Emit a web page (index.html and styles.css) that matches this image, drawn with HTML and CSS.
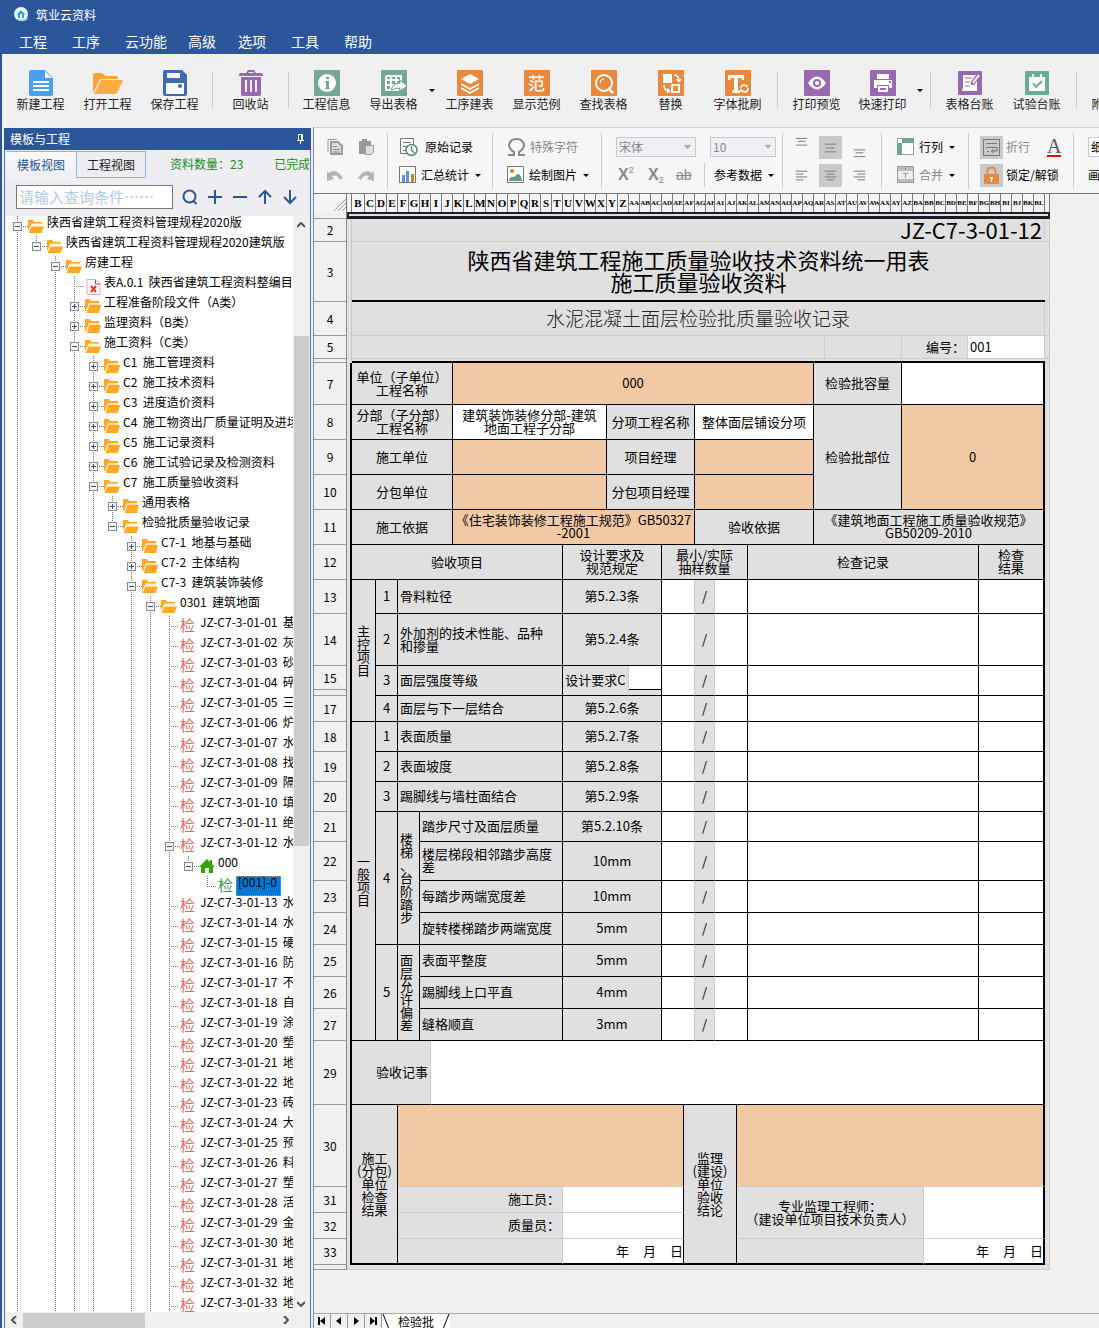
FILE: index.html
```html
<!DOCTYPE html>
<html lang="zh-CN">
<head>
<meta charset="utf-8">
<title>筑业云资料</title>
<link rel="stylesheet" href="styles.css">
</head>
<body>
<svg class="defs" aria-hidden="true">
  <symbol id="fo" viewBox="0 0 16 14"><path fill="#ffa726" d="M0 1h5l1 2h8v3H3L0 12z"/><path fill="#fff" d="M3 6h11V4.500H3.500z" opacity=".8"/><path fill="#ffa726" d="M3.500 7.500H16L13.500 14H.5z"/></symbol>
  <symbol id="fc" viewBox="0 0 16 14"><path fill="#ffa726" d="M0 0h5l1 2h8v2H4L1 12H0z"/><path fill="#ffe0b0" d="M4 4h10v2H4L2 11z"/><path fill="#ffa726" d="M4.500 6H16l-2 8H1.500z"/></symbol>
</svg>

<header class="top">
  <div class="title">
    <svg width="16" height="16" viewBox="0 0 16 16"><circle cx="7" cy="7" r="7" fill="#e8f6fd"/><path d="M2.500 7.500L7 3l4.500 4.500h-1.500V11H4V7.500z" fill="#35a8e0"/><path d="M6 7h2v4H6z" fill="#fff"/><path d="M3 12q6 2 12-1-3 4-9 3z" fill="#8fc9ee"/></svg>
    <span>筑业云资料</span>
  </div>
  <nav class="menu">
    <button>工程</button><button>工序</button><button>云功能</button><button>高级</button><button>选项</button><button>工具</button><button>帮助</button>
  </nav>
</header>

<div class="window">
  <div class="ribbon">
    <button class="big"><svg viewBox="0 0 26 26"><path fill="#4a9ff0" d="M3 0h14l8 8v16q0 2-2 2H3q-2 0-2-2V2q0-2 2-2z"/><path fill="#fff" d="M17 1v6q0 1 1 1h6zM5 11h16v2H5zM5 15h16v2H5zM5 19h16v2H5z"/></svg>新建工程</button>
    <button class="big"><svg viewBox="0 0 32 26"><path fill="#ffa238" d="M1 23V5q0-2 2-2h7l4 3h10q2 0 2 2v1H8z"/><path fill="#ffab45" d="M9 10h22l-6 13q-1 1-2 1H2z"/></svg>打开工程</button>
    <button class="big"><svg viewBox="0 0 26 26"><path fill="#3f6cb0" d="M3 0h17l5 5v19q0 2-2 2H3q-2 0-2-2V2q0-2 2-2z"/><path fill="#f5f7fa" d="M5 3h13v5H5zM4 13h18v11H4z"/><circle cx="18" cy="16" r="2" fill="#3f6cb0"/></svg>保存工程</button>
    <i class="sep"></i>
    <button class="big"><svg viewBox="0 0 26 26"><path fill="#9a68b2" fill-rule="evenodd" d="M8 3l2-3h6l2 3h6q1 0 1 3H1q0-3 1-3zm2 0h6l-1-1h-4zM3 7h20v17q0 2-2 2H5q-2 0-2-2zm4 3v12h2V10zm5 0v12h2V10zm5 0v12h2V10z"/></svg>回收站</button>
    <i class="sep"></i>
    <button class="big"><svg viewBox="0 0 26 26"><rect width="26" height="26" rx="1" fill="#74a895"/><circle cx="13" cy="13" r="9" fill="#fff"/><path fill="#74a895" d="M12 7h3v2h-3zM11 11h4v7h1v1h-5v-1h1v-6h-1z"/></svg>工程信息</button>
    <button class="big"><svg viewBox="0 0 26 26"><rect width="26" height="26" rx="1" fill="#74a895"/><path fill="none" stroke="#fff" stroke-width="2" d="M5 6h15v5M5 6v14h13M5 10h13M5 15h8M10 6v14M15 6v7"/><path fill="#fff" stroke="#74a895" d="M10 20q2-7 9-7v-3l7 6-7 5v-3q-5 0-9 2z"/></svg>导出表格</button>
    <button class="drop" aria-label="更多导出"></button>
    <button class="big"><svg viewBox="0 0 26 26"><rect width="26" height="26" rx="1" fill="#e8893d"/><path fill="#fff" d="M13 4l9 5-9 5-9-5zM4 13l9 5 9-5v2l-9 5-9-5zM4 17l9 5 9-5v2l-9 5-9-5z"/></svg>工序建表</button>
    <button class="big"><b class="glyph">范</b>显示范例</button>
    <button class="big"><svg viewBox="0 0 26 26"><rect width="26" height="26" rx="1" fill="#e8893d"/><circle cx="13" cy="13" r="8" fill="none" stroke="#fff" stroke-width="2"/><path stroke="#fff" stroke-width="2.500" d="M17 18l5 5"/><path fill="none" stroke="#fff" d="M9 13q0-4 4-4"/></svg>查找表格</button>
    <button class="big"><svg viewBox="0 0 26 26"><rect width="26" height="26" rx="1" fill="#e8893d"/><path fill="#fff" d="M5 4h9v9H5z"/><path fill="none" stroke="#fff" stroke-width="2" d="M14 15h7v7h-7z"/><path fill="none" stroke="#fff" stroke-width="1.500" d="M16 5q5 0 5 6M18.500 9l2.500 2.500L23 9M6 15q0 6 5 6M9 18.500l2.500 2.500L9 23"/></svg>替换</button>
    <button class="big"><svg viewBox="0 0 26 26"><rect width="26" height="26" rx="1" fill="#e8893d"/><path fill="#fff" d="M3 5h16v5h-2l-1-2h-3v12l2 1v2H7v-2l2-1V8H6l-1 2H3z"/><path fill="none" stroke="#fff" stroke-width="1.500" d="M16 18q0-3 3-3 2 0 3 2v-2M23 18q0 4-3 4-2 0-4-2v2"/></svg>字体批刷</button>
    <i class="sep wide"></i>
    <button class="big"><svg viewBox="0 0 26 26"><rect width="26" height="26" rx="1" fill="#9a68b2"/><path fill="#fff" d="M4 13q9-13 18 0-9 13-18 0z"/><circle cx="13" cy="13" r="4" fill="#9a68b2"/><circle cx="13" cy="13" r="2" fill="#fff"/></svg>打印预览</button>
    <button class="big near"><svg viewBox="0 0 26 26"><rect width="26" height="26" rx="1" fill="#9a68b2"/><path fill="#fff" d="M7 4h12v5H7zM4 10h18v8h-3v-3H7v3H4zM8 16h10v6H8z"/><path fill="#9a68b2" d="M10 18h6v2h-6zM19 11h2v2h-2z"/></svg>快速打印</button>
    <button class="drop" aria-label="更多打印"></button>
    <i class="sep wide"></i>
    <button class="big"><svg viewBox="0 0 26 26"><rect x="1" y="1" width="24" height="24" rx="1" fill="#9a68b2"/><path fill="#fff" d="M6 5h13l-5 7v3h3l3-4v10H5q0-2 1-3z"/><path fill="none" stroke="#9a68b2" d="M8 8h7M8 12h5M8 16h5"/><path stroke="#fff" stroke-width="2" d="M16 13l6-8"/></svg>表格台账</button>
    <button class="big"><svg viewBox="0 0 26 26"><rect x="1" y="1" width="24" height="24" rx="1" fill="#68ae98"/><path fill="#fff" d="M5 7h3V4h2v3h6V4h2v3h3v14H5z"/><path fill="none" stroke="#68ae98" stroke-width="2" d="M9 13l3 4 6-6"/></svg>试验台账</button>
    <i class="sep wide"></i>
    <button class="big"><svg viewBox="0 0 26 26"></svg>附件管理</button>
  </div>

  <div class="work">
    <aside class="panel">
      <h2>模板与工程<svg width="9" height="10" viewBox="0 0 9 10"><path fill="none" stroke="#fff" d="M2.500 6V.5h4V6M5.500 1v5M1 6.500h7M4.500 7v3"/></svg></h2>
      <div class="inner">
        <div class="tabs">
          <button class="on">模板视图</button><button>工程视图</button>
          <span class="count">资料数量：23</span><span>已完成：1</span>
        </div>
        <div class="search">
          <input type="text" aria-label="查询条件" placeholder="请输入查询条件……">
          <button aria-label="查询"><svg viewBox="0 0 16 16"><circle cx="7.500" cy="7.500" r="6"/><path d="M11.500 12l3 3"/></svg></button>
          <button aria-label="展开"><svg viewBox="0 0 16 16"><path d="M8 1v14M1 8h14"/></svg></button>
          <button aria-label="折叠"><svg viewBox="0 0 16 16"><path d="M1 8h14"/></svg></button>
          <button aria-label="上一个"><svg viewBox="0 0 16 16"><path d="M8 2v13M2 8l6-6 6 6"/></svg></button>
          <button aria-label="下一个"><svg viewBox="0 0 16 16"><path d="M8 1v13M2 8l6 6 6-6"/></svg></button>
        </div>
        <div class="treebox">
          <ul class="tree">
            <li><div class="row"><button aria-label="折叠"></button><svg><use href="#fo"/></svg><span>陕西省建筑工程资料管理规程2020版</span></div>
            <ul><li class="last"><div class="row"><button aria-label="折叠"></button><svg><use href="#fo"/></svg><span>陕西省建筑工程资料管理规程2020建筑版</span></div>
            <ul><li><div class="row"><button aria-label="折叠"></button><svg><use href="#fo"/></svg><span>房建工程</span></div>
            <ul>
              <li><div class="row leaf"><svg viewBox="0 0 16 16"><path fill="#fff" stroke="#f3a5a5" d="M2 .5h9l4 4v11H2z"/><path fill="none" stroke="#e33" stroke-width="2" d="M6 7l5 6M11 7l-5 6"/><path fill="none" stroke="#e33" d="M10.500 1v4H15"/></svg><span>表A.0.1  陕西省建筑工程资料整编目录</span></div></li>
              <li><div class="row"><button class="plus" aria-label="展开"></button><svg><use href="#fc"/></svg><span>工程准备阶段文件（A类）</span></div></li>
              <li><div class="row"><button class="plus" aria-label="展开"></button><svg><use href="#fc"/></svg><span>监理资料（B类）</span></div></li>
              <li><div class="row"><button aria-label="折叠"></button><svg><use href="#fo"/></svg><span>施工资料（C类）</span></div>
              <ul>
                <li><div class="row"><button class="plus" aria-label="展开"></button><svg><use href="#fc"/></svg><span>C1  施工管理资料</span></div></li>
                <li><div class="row"><button class="plus" aria-label="展开"></button><svg><use href="#fc"/></svg><span>C2  施工技术资料</span></div></li>
                <li><div class="row"><button class="plus" aria-label="展开"></button><svg><use href="#fc"/></svg><span>C3  进度造价资料</span></div></li>
                <li><div class="row"><button class="plus" aria-label="展开"></button><svg><use href="#fc"/></svg><span>C4  施工物资出厂质量证明及进场检测</span></div></li>
                <li><div class="row"><button class="plus" aria-label="展开"></button><svg><use href="#fc"/></svg><span>C5  施工记录资料</span></div></li>
                <li><div class="row"><button class="plus" aria-label="展开"></button><svg><use href="#fc"/></svg><span>C6  施工试验记录及检测资料</span></div></li>
                <li><div class="row"><button aria-label="折叠"></button><svg><use href="#fo"/></svg><span>C7  施工质量验收资料</span></div>
                <ul>
                  <li><div class="row"><button class="plus" aria-label="展开"></button><svg><use href="#fc"/></svg><span>通用表格</span></div></li>
                  <li class="last"><div class="row"><button aria-label="折叠"></button><svg><use href="#fo"/></svg><span>检验批质量验收记录</span></div>
                  <ul>
                    <li><div class="row"><button class="plus" aria-label="展开"></button><svg><use href="#fc"/></svg><span>C7-1  地基与基础</span></div></li>
                    <li><div class="row"><button class="plus" aria-label="展开"></button><svg><use href="#fc"/></svg><span>C7-2  主体结构</span></div></li>
                    <li><div class="row"><button aria-label="折叠"></button><svg><use href="#fo"/></svg><span>C7-3  建筑装饰装修</span></div>
                    <ul><li><div class="row"><button aria-label="折叠"></button><svg><use href="#fo"/></svg><span>0301  建筑地面</span></div>
                    <ul>
                      <li><div class="row leaf"><b>检</b><span>JZ-C7-3-01-01  基土</span></div></li>
                      <li><div class="row leaf"><b>检</b><span>JZ-C7-3-01-02  灰土</span></div></li>
                      <li><div class="row leaf"><b>检</b><span>JZ-C7-3-01-03  砂垫层</span></div></li>
                      <li><div class="row leaf"><b>检</b><span>JZ-C7-3-01-04  碎石</span></div></li>
                      <li><div class="row leaf"><b>检</b><span>JZ-C7-3-01-05  三合土</span></div></li>
                      <li><div class="row leaf"><b>检</b><span>JZ-C7-3-01-06  炉渣</span></div></li>
                      <li><div class="row leaf"><b>检</b><span>JZ-C7-3-01-07  水泥</span></div></li>
                      <li><div class="row leaf"><b>检</b><span>JZ-C7-3-01-08  找平层</span></div></li>
                      <li><div class="row leaf"><b>检</b><span>JZ-C7-3-01-09  隔离层</span></div></li>
                      <li><div class="row leaf"><b>检</b><span>JZ-C7-3-01-10  填充层</span></div></li>
                      <li><div class="row leaf"><b>检</b><span>JZ-C7-3-01-11  绝热层</span></div></li>
                      <li><div class="row"><button aria-label="折叠"></button><b>检</b><span>JZ-C7-3-01-12  水泥</span></div>
                      <ul><li class="last"><div class="row"><button aria-label="折叠"></button><svg viewBox="0 0 16 14"><path fill="#34a400" d="M8 0l3 3V1h2v4l3 3h-2v6h-4V9H6v5H2V8H0z"/></svg><span>000</span></div>
                      <ul><li class="last"><div class="row leaf"><b class="green">检</b><span class="sel">[001]-0</span></div></li></ul></li></ul></li>
                      <li><div class="row leaf"><b>检</b><span>JZ-C7-3-01-13  水泥</span></div></li>
                      <li><div class="row leaf"><b>检</b><span>JZ-C7-3-01-14  水磨石</span></div></li>
                      <li><div class="row leaf"><b>检</b><span>JZ-C7-3-01-15  硬化</span></div></li>
                      <li><div class="row leaf"><b>检</b><span>JZ-C7-3-01-16  防油渗</span></div></li>
                      <li><div class="row leaf"><b>检</b><span>JZ-C7-3-01-17  不发火</span></div></li>
                      <li><div class="row leaf"><b>检</b><span>JZ-C7-3-01-18  自流平</span></div></li>
                      <li><div class="row leaf"><b>检</b><span>JZ-C7-3-01-19  涂料</span></div></li>
                      <li><div class="row leaf"><b>检</b><span>JZ-C7-3-01-20  塑胶</span></div></li>
                      <li><div class="row leaf"><b>检</b><span>JZ-C7-3-01-21  地面</span></div></li>
                      <li><div class="row leaf"><b>检</b><span>JZ-C7-3-01-22  地面</span></div></li>
                      <li><div class="row leaf"><b>检</b><span>JZ-C7-3-01-23  砖面层</span></div></li>
                      <li><div class="row leaf"><b>检</b><span>JZ-C7-3-01-24  大理石</span></div></li>
                      <li><div class="row leaf"><b>检</b><span>JZ-C7-3-01-25  预制板</span></div></li>
                      <li><div class="row leaf"><b>检</b><span>JZ-C7-3-01-26  料石</span></div></li>
                      <li><div class="row leaf"><b>检</b><span>JZ-C7-3-01-27  塑料板</span></div></li>
                      <li><div class="row leaf"><b>检</b><span>JZ-C7-3-01-28  活动</span></div></li>
                      <li><div class="row leaf"><b>检</b><span>JZ-C7-3-01-29  金属板</span></div></li>
                      <li><div class="row leaf"><b>检</b><span>JZ-C7-3-01-30  地毯</span></div></li>
                      <li><div class="row leaf"><b>检</b><span>JZ-C7-3-01-31  地面</span></div></li>
                      <li><div class="row leaf"><b>检</b><span>JZ-C7-3-01-32  地面</span></div></li>
                      <li><div class="row leaf"><b>检</b><span>JZ-C7-3-01-33  地面</span></div></li>
                    </ul></li></ul></li>
                  </ul></li>
                </ul></li>
              </ul></li>
            </ul></li></ul></li></ul></li>
          </ul>
          <div class="vbar"><svg viewBox="0 0 8 6"><path d="M0 5l4-4 4 4"/></svg><i></i><svg viewBox="0 0 8 6"><path d="M0 1l4 4 4-4"/></svg></div>
        </div>
        <div class="hbar"><svg viewBox="0 0 6 8"><path d="M5 0L1 4l4 4"/></svg><i></i><svg viewBox="0 0 6 8"><path d="M1 0l4 4-4 4"/></svg></div>
      </div>
    </aside>

    <main class="doc">
      <div class="tools">
        <div class="grp g1">
          <div><button aria-label="复制"><svg width="18" height="18" viewBox="0 0 18 18"><path fill="none" stroke="#999" d="M2 14V1.500h9"/><path fill="#ddd" stroke="#999" stroke-width="2" d="M5 4h7l4 4v8H5z"/><path stroke="#888" d="M7 8.500h4M7 11.500h7M7 14h7"/></svg></button><button aria-label="粘贴"><svg width="18" height="18" viewBox="0 0 18 18"><path fill="#999" d="M2 3h3V1h5v2h4v4H8v9H2z"/><path fill="#ddd" stroke="#999" d="M8.500 7.500h8V14l-2 2.500h-6z"/></svg></button></div>
          <div><button aria-label="撤销"><svg width="18" height="14" viewBox="0 0 18 14"><path fill="#b5b5b5" d="M1 3l2 2q7-6 14 5l-3 2Q11 6 6 8l2 3-7 2z"/></svg></button><button aria-label="重做"><svg width="18" height="14" viewBox="0 0 18 14"><path fill="#b5b5b5" d="M17 3l-2 2Q8-1 1 10l3 2q3-6 8-4l-2 3 7 2z"/></svg></button></div>
        </div>
        <div class="grp g2">
          <div><button><svg width="19" height="20" viewBox="0 0 19 20"><path fill="#fff" stroke="#777" d="M1.500 1.500h13v15h-13z"/><path stroke="#777" d="M4 5.500h8M4 9.500h4M4 13.500h3"/><circle cx="12.500" cy="13" r="5.500" fill="#fff" stroke="#4f8f78" stroke-width="1.500"/><path fill="none" stroke="#4f8f78" stroke-width="1.500" d="M12.500 9v4l3 3"/></svg><span class="in">原始记录</span></button></div>
          <div><button><svg width="18" height="18" viewBox="0 0 18 18"><path fill="#fff" stroke="#777" d="M.5.5h16v16H.5z"/><path fill="#5b93dd" d="M3 9h3v7H3zM7 5h3v11H7z"/><path fill="#e07b1c" d="M12 8h3v8h-3z"/></svg><span>汇总统计</span></button><button class="drop" aria-label="更多统计"></button></div>
        </div>
        <div class="grp g3">
          <div><button disabled><svg width="19" height="20" viewBox="0 0 19 20"><path fill="none" stroke="#888" stroke-width="2" d="M1 18h6v-3Q2 12 2 8q1-6 7.500-6T17 8q0 4-5 7v3h6"/></svg><span>特殊字符</span></button></div>
          <div><button><svg width="18" height="18" viewBox="0 0 18 18"><path fill="#fff" stroke="#777" d="M.5.5h16v16H.5z"/><circle cx="5" cy="5" r="2" fill="#e07b1c"/><path fill="#5f9b88" d="M2 15q1-5 5-4 3-3 4-3 3 0 4 7z"/></svg><span>绘制图片</span></button><button class="drop" aria-label="更多图片"></button></div>
        </div>
        <div class="grp g4">
          <div><select class="font" aria-label="字体" disabled><option>宋体</option></select><select class="size" aria-label="字号" disabled><option>10</option></select></div>
          <div><button disabled class="x">X<sup>2</sup></button><button disabled class="x">X<sub>2</sub></button><button disabled class="ab"><s>ab</s></button><i class="sep"></i><button><span>参考数据</span></button><button class="drop" aria-label="更多数据"></button></div>
        </div>
        <div class="grp g5">
          <div><button aria-label="顶端对齐"><svg viewBox="0 0 24 24"><path d="M6 2.500h12M8 5.500h8M6 9.500h12"/></svg></button><button class="on" aria-label="垂直居中"><svg viewBox="0 0 24 24"><path d="M6 8.500h12M8 12.500h8M6 16.500h12"/></svg></button><button aria-label="底端对齐"><svg viewBox="0 0 24 24"><path d="M6 14.500h12M8 17.500h8M6 21.500h12"/></svg></button></div>
          <div><button aria-label="左对齐"><svg viewBox="0 0 24 24"><path d="M6 7.500h12M6 10.500h8M6 13.500h12M6 16.500h8"/></svg></button><button class="on" aria-label="居中"><svg viewBox="0 0 24 24"><path d="M6 7.500h12M8 10.500h8M6 13.500h12M8 16.500h8"/></svg></button><button aria-label="右对齐"><svg viewBox="0 0 24 24"><path d="M6 7.500h12M10 10.500h8M6 13.500h12M10 16.500h8"/></svg></button></div>
        </div>
        <div class="grp g6">
          <div><button><svg width="18" height="18" viewBox="0 0 18 18"><path fill="#fff" stroke="#999" d="M.5.5h16v16H.5z"/><path fill="#6fa492" d="M5 0h12v5H5zM0 5h5v12H0z"/></svg><span>行列</span></button><button class="drop" aria-label="更多行列"></button></div>
          <div><button disabled><svg width="18" height="18" viewBox="0 0 18 18"><path fill="#eee" stroke="#999" d="M.5.5h16v16H.5z"/><path fill="#bbb" d="M1 1h15v4H1zM1 13h15v3H1z"/><path fill="none" stroke="#999" d="M8.500 1v3M6 7.500h5M8.500 8v4"/></svg><span>合并</span></button><button class="drop" aria-label="更多合并"></button></div>
        </div>
        <div class="grp g7">
          <div><button class="dim"><svg class="on" width="23" height="23" viewBox="0 0 23 23"><path fill="none" stroke="#777" d="M3.500 3.500h16v16h-16zM6 7.500h11M6 11.500h11M17 11v4h-5M7 15.500h2M14 13l-3 2.500 3 1"/></svg><span>折行</span></button><button aria-label="字体颜色" class="color">A</button></div>
          <div><button><svg class="on" width="23" height="23" viewBox="0 0 23 23"><path fill="none" stroke="#e8893d" stroke-width="2" d="M7.500 10V7q0-3.500 4-3.500t4 3.500v3"/><path fill="#e8893d" d="M4 10h15v10H4z"/><path fill="#fff" d="M10 13h3v2l-1 1v2h-1v-2l-1-1z"/></svg><span>锁定/解锁</span></button></div>
        </div>
        <div class="grp g8">
          <div><select aria-label="线型"><option>细线</option></select></div>
          <div><button>画线</button></div>
        </div>
      </div>

      <div class="sheet">
        <table>
          <colgroup><col class="c-head"><col class="c-edge"><col class="c-first"><col class="c" span="31"><col class="c-thin"><col class="c" span="30"><col class="c-edge"></colgroup>
          <thead>
            <tr class="letters"><th class="corner"><svg width="12" height="12" viewBox="0 0 12 12"><path stroke="#999" d="M0 12L12 0M4 12l8-8M8 12l4-4"/></svg></th><th></th><th>B</th><th>C</th><th>D</th><th>E</th><th>F</th><th>G</th><th>H</th><th>I</th><th>J</th><th>K</th><th>L</th><th>M</th><th>N</th><th>O</th><th>P</th><th>Q</th><th>R</th><th>S</th><th>T</th><th>U</th><th>V</th><th>W</th><th>X</th><th>Y</th><th>Z</th><th>AA</th><th>AB</th><th>AC</th><th>AD</th><th>AE</th><th>AF</th><th>AG</th><th>AH</th><th>AI</th><th>AJ</th><th>AK</th><th>AL</th><th>AM</th><th>AN</th><th>AO</th><th>AP</th><th>AQ</th><th>AR</th><th>AS</th><th>AT</th><th>AU</th><th>AV</th><th>AW</th><th>AX</th><th>AY</th><th>AZ</th><th>BA</th><th>BB</th><th>BC</th><th>BD</th><th>BE</th><th>BF</th><th>BG</th><th>BH</th><th>BI</th><th>BJ</th><th>BK</th><th>BL</th><th></th></tr>
          </thead>
          <tbody>
            <tr class="r1"><th></th><td colspan="65"></td></tr>
            <tr class="h23"><th>2</th><td class="edge"></td><td colspan="63" class="f code">JZ-C7-3-01-12</td><td class="f"></td></tr>
            <tr class="h60"><th>3</th><td class="edge"></td><td colspan="63" class="heading">陕西省建筑工程施工质量验收技术资料统一用表<br>施工质量验收资料</td><td class="f"></td></tr>
            <tr class="h34"><th>4</th><td class="edge"></td><td colspan="63" class="f sub">水泥混凝土面层检验批质量验收记录</td><td class="f"></td></tr>
            <tr class="h23"><th>5</th><td class="edge"></td><td colspan="43" class="f"></td><td colspan="7" class="f"></td><td colspan="6" class="f r">编号：</td><td colspan="7" class="w f l">001</td><td class="f"></td></tr>
            <tr class="h4"><th></th><td class="edge"></td><td colspan="63" class="thick"></td><td class="f"></td></tr>
            <tr class="h42"><th>7</th><td class="k" rowspan="26"></td><td colspan="9">单位（子单位）<br>工程名称</td><td colspan="33" class="o">000</td><td colspan="8">检验批容量</td><td colspan="13" class="w e"></td><td class="f" rowspan="26"></td></tr>
            <tr class="h35"><th>8</th><td colspan="9">分部（子分部）<br>工程名称</td><td colspan="14" class="w">建筑装饰装修分部-建筑<br>地面工程子分部</td><td colspan="8">分项工程名称</td><td colspan="11" class="w">整体面层铺设分项</td><td colspan="8" rowspan="3">检验批部位</td><td colspan="13" rowspan="3" class="o e">0</td></tr>
            <tr class="h35"><th>9</th><td colspan="9">施工单位</td><td colspan="14" class="o"></td><td colspan="8">项目经理</td><td colspan="11" class="o"></td></tr>
            <tr class="h35"><th>10</th><td colspan="9">分包单位</td><td colspan="14" class="o"></td><td colspan="8">分包项目经理</td><td colspan="11" class="o"></td></tr>
            <tr class="h35"><th>11</th><td colspan="9">施工依据</td><td colspan="22" class="o">《住宅装饰装修工程施工规范》GB50327<br>-2001</td><td colspan="11">验收依据</td><td colspan="21" class="e">《建筑地面工程施工质量验收规范》<br>GB50209-2010</td></tr>
            <tr class="h35"><th>12</th><td colspan="19">验收项目</td><td colspan="9">设计要求及<br>规范规定</td><td colspan="8">最小/实际<br>抽样数量</td><td colspan="21">检查记录</td><td colspan="6" class="e">检查<br>结果</td></tr>
            <tr class="h34"><th>13</th><td colspan="2" rowspan="5">主<br>控<br>项<br>目</td><td colspan="2">1</td><td colspan="15" class="l">骨料粒径</td><td colspan="9">第5.2.3条</td><td colspan="3" class="w v"></td><td colspan="2" class="v">/</td><td colspan="3" class="w"></td><td colspan="21" class="w"></td><td colspan="6" class="w e"></td></tr>
            <tr class="h52"><th>14</th><td colspan="2">2</td><td colspan="15" class="l">外加剂的技术性能、品种<br>和掺量</td><td colspan="9">第5.2.4条</td><td colspan="3" class="w v"></td><td colspan="2" class="v">/</td><td colspan="3" class="w"></td><td colspan="21" class="w"></td><td colspan="6" class="w e"></td></tr>
            <tr class="h24"><th>15</th><td colspan="2" rowspan="2">3</td><td colspan="15" rowspan="2" class="l">面层强度等级</td><td colspan="6" rowspan="2" class="v">设计要求C</td><td colspan="3" class="w"></td><td colspan="3" rowspan="2" class="w v"></td><td colspan="2" rowspan="2" class="v">/</td><td colspan="3" rowspan="2" class="w"></td><td colspan="21" rowspan="2" class="w"></td><td colspan="6" rowspan="2" class="w e"></td></tr>
            <tr class="h6"><th></th><td colspan="3"></td></tr>
            <tr class="h26"><th>17</th><td colspan="2">4</td><td colspan="15" class="l">面层与下一层结合</td><td colspan="9">第5.2.6条</td><td colspan="3" class="w v"></td><td colspan="2" class="v">/</td><td colspan="3" class="w"></td><td colspan="21" class="w"></td><td colspan="6" class="w e"></td></tr>
            <tr class="h30"><th>18</th><td colspan="2" rowspan="10">一<br>般<br>项<br>目</td><td colspan="2">1</td><td colspan="15" class="l">表面质量</td><td colspan="9">第5.2.7条</td><td colspan="3" class="w v"></td><td colspan="2" class="v">/</td><td colspan="3" class="w"></td><td colspan="21" class="w"></td><td colspan="6" class="w e"></td></tr>
            <tr class="h30"><th>19</th><td colspan="2">2</td><td colspan="15" class="l">表面坡度</td><td colspan="9">第5.2.8条</td><td colspan="3" class="w v"></td><td colspan="2" class="v">/</td><td colspan="3" class="w"></td><td colspan="21" class="w"></td><td colspan="6" class="w e"></td></tr>
            <tr class="h30"><th>20</th><td colspan="2">3</td><td colspan="15" class="l">踢脚线与墙柱面结合</td><td colspan="9">第5.2.9条</td><td colspan="3" class="w v"></td><td colspan="2" class="v">/</td><td colspan="3" class="w"></td><td colspan="21" class="w"></td><td colspan="6" class="w e"></td></tr>
            <tr class="h30"><th>21</th><td colspan="2" rowspan="4">4</td><td colspan="2" rowspan="4" class="stack">楼<br>梯<br>、<br>台<br>阶<br>踏<br>步</td><td colspan="13" class="l">踏步尺寸及面层质量</td><td colspan="9">第5.2.10条</td><td colspan="3" class="w v"></td><td colspan="2" class="v">/</td><td colspan="3" class="w"></td><td colspan="21" class="w"></td><td colspan="6" class="w e"></td></tr>
            <tr class="h39"><th>22</th><td colspan="13" class="l">楼层梯段相邻踏步高度<br>差</td><td colspan="9">10mm</td><td colspan="3" class="w v"></td><td colspan="2" class="v">/</td><td colspan="3" class="w"></td><td colspan="21" class="w"></td><td colspan="6" class="w e"></td></tr>
            <tr class="h32"><th>23</th><td colspan="13" class="l">每踏步两端宽度差</td><td colspan="9">10mm</td><td colspan="3" class="w v"></td><td colspan="2" class="v">/</td><td colspan="3" class="w"></td><td colspan="21" class="w"></td><td colspan="6" class="w e"></td></tr>
            <tr class="h32"><th>24</th><td colspan="13" class="l">旋转楼梯踏步两端宽度</td><td colspan="9">5mm</td><td colspan="3" class="w v"></td><td colspan="2" class="v">/</td><td colspan="3" class="w"></td><td colspan="21" class="w"></td><td colspan="6" class="w e"></td></tr>
            <tr class="h32"><th>25</th><td colspan="2" rowspan="3">5</td><td colspan="2" rowspan="3" class="stack">面<br>层<br>允<br>许<br>偏<br>差</td><td colspan="13" class="l">表面平整度</td><td colspan="9">5mm</td><td colspan="3" class="w v"></td><td colspan="2" class="v">/</td><td colspan="3" class="w"></td><td colspan="21" class="w"></td><td colspan="6" class="w e"></td></tr>
            <tr class="h32"><th>26</th><td colspan="13" class="l">踢脚线上口平直</td><td colspan="9">4mm</td><td colspan="3" class="w v"></td><td colspan="2" class="v">/</td><td colspan="3" class="w"></td><td colspan="21" class="w"></td><td colspan="6" class="w e"></td></tr>
            <tr class="h32"><th>27</th><td colspan="13" class="l">缝格顺直</td><td colspan="9">3mm</td><td colspan="3" class="w v"></td><td colspan="2" class="v">/</td><td colspan="3" class="w"></td><td colspan="21" class="w"></td><td colspan="6" class="w e"></td></tr>
            <tr class="h64"><th>29</th><td colspan="7" class="v r">验收记事</td><td colspan="56" class="w e"></td></tr>
            <tr class="h82"><th>30</th><td colspan="4" rowspan="4" class="b">施工<br>(分包)<br>单位<br>检查<br>结果</td><td colspan="26" class="o u"></td><td colspan="5" rowspan="4" class="b">监理<br>(建设)<br>单位<br>验收<br>结论</td><td colspan="28" class="o u e"></td></tr>
            <tr class="h26"><th>31</th><td colspan="15" class="f r">施工员：</td><td colspan="11" class="w u"></td><td colspan="17" rowspan="2" class="f">专业监理工程师：<br>（建设单位项目技术负责人）</td><td colspan="11" rowspan="2" class="w u e"></td></tr>
            <tr class="h26"><th>32</th><td colspan="15" class="f r">质量员：</td><td colspan="11" class="w u"></td></tr>
            <tr class="h26"><th>33</th><td colspan="15" class="v b"></td><td colspan="11" class="w b date"><span>年</span><span>月</span><span>日</span></td><td colspan="17" class="v b"></td><td colspan="11" class="w b e date"><span>年</span><span>月</span><span>日</span></td></tr>
            <tr class="h5"><th></th><td colspan="65" class="f"></td></tr>
          </tbody>
        </table>
      </div>

      <div class="pages">
        <button aria-label="第一页"><svg viewBox="0 0 10 10"><path d="M1 1h2v8H1zM8 1v8L3 5z"/></svg></button>
        <button aria-label="上一页"><svg viewBox="0 0 10 10"><path d="M7 1v8L2 5z"/></svg></button>
        <button aria-label="下一页"><svg viewBox="0 0 10 10"><path d="M3 1v8l5-4z"/></svg></button>
        <button aria-label="末页"><svg viewBox="0 0 10 10"><path d="M7 1h2v8H7zM2 1v8l5-4z"/></svg></button>
        <button class="page"><svg width="8" height="15" viewBox="0 0 8 15"><path d="M1 0l6 15"/></svg>检验批<svg width="8" height="15" viewBox="0 0 8 15"><path d="M7 0L1 15"/></svg></button>
      </div>
    </main>
  </div>
</div>
</body>
</html>
```
FILE: styles.css
```css
* { box-sizing: border-box; }
body {
  margin: 0;
  height: 100vh;
  display: flex;
  flex-direction: column;
  overflow: hidden;
  background: #2b579a;
  color: #000;
  font: 12px/16px "Noto Sans CJK SC", sans-serif;
}
button {
  margin: 0;
  padding: 0;
  border: 0;
  background: none;
  color: inherit;
  font: inherit;
  white-space: nowrap;
}
.defs { width: 0; height: 0; flex: none; position: absolute; }

/* title bar and menu */
.top { flex: none; height: 54px; color: #fff; padding: 6px 0 0 14px; }
.title { display: flex; align-items: center; gap: 6px; height: 17px; }
.menu { display: flex; gap: 25px; padding: 8px 0 0 5px; font-size: 14px; line-height: 20px; }
.menu button:nth-child(4) { margin-right: -3px; }
.menu button:nth-child(3) { margin-right: -4px; }

.window {
  flex: 1;
  min-height: 0;
  display: flex;
  flex-direction: column;
  margin-left: 2px;
  background: #f0f0f0;
}
.ribbon {
  flex: none;
  display: flex;
  height: 73px;
  padding: 16px 0 0 5px;
  overflow: hidden;
  color: #222;
}
.big { flex: none; width: 67px; display: flex; flex-direction: column; align-items: center; }
.big.near { width: 65px; }
.big svg { flex: none; height: 26px; }
.glyph {
  width: 26px;
  height: 26px;
  border-radius: 1px;
  background: #e8893d;
  color: #fff;
  font-size: 17px;
  font-weight: 500;
  line-height: 25px;
}
.sep { flex: none; width: 1px; height: 36px; margin: 2px 4px 0; background: #ccc; }
.sep.wide { margin: 2px 5px 0 6px; }
.drop { flex: none; width: 9px; height: 40px; display: grid; place-items: center; }
.drop::before { content: ""; border: 3px solid transparent; border-top-color: #000; border-bottom: 0; }

.work { flex: 1; min-height: 0; display: flex; gap: 2px; padding-left: 2px; }

/* left panel */
.panel { flex: none; width: 307px; display: flex; flex-direction: column; margin-top: 1px; }
.panel h2 {
  flex: none;
  display: flex;
  justify-content: space-between;
  align-items: center;
  height: 22px;
  margin: 0;
  padding: 0 6px;
  background: #2b579a;
  color: #fff;
  font-size: 12px;
  font-weight: 400;
}
.inner {
  flex: 1;
  min-height: 0;
  display: flex;
  flex-direction: column;
  border: solid #4a7ccc;
  border-width: 0 1px;
  padding: 0 1px;
  background: #eeedf2;
}
.tabs { flex: none; display: flex; align-items: center; height: 28px; overflow: hidden; color: #228b22; white-space: nowrap; }
.tabs button { flex: none; height: 27px; width: 70px; margin-top: 1px; border: 1px solid #8fb2e6; color: #222; }
.tabs .on { border-color: #8fb2e6 transparent transparent; background: linear-gradient(#fafafc, #eeedf2); color: #2b579a; }
.count { margin: 0 31px 0 24px; }
.search { flex: none; display: flex; align-items: center; gap: 9px; height: 38px; padding: 0 0 0 10px; }
.search input {
  flex: 1;
  min-width: 0;
  height: 24px;
  padding: 0 2px 2px;
  border: 1px solid #777;
  font: inherit;
  font-size: 15px;
}
.search input::placeholder { color: #b3c9e6; opacity: 1; }
.search button { flex: none; width: 16px; height: 16px; }
.search button:last-child { margin-right: 11px; }
.search svg { display: block; width: 16px; height: 16px; fill: none; stroke: #2b579a; stroke-width: 2; }

.treebox { flex: 1; min-height: 0; display: flex; background: #fff; overflow: hidden; }
.tree { flex: 1; min-width: 0; overflow: hidden; }
.tree, .tree ul { margin: 0; padding: 0; list-style: none; }
.tree ul { padding-left: 19px; }
.tree li { background: repeating-linear-gradient(#777 0 1px, transparent 1px 2px) 11px 0 / 1px 100% no-repeat; }
.tree li.last { background-size: 1px 10px; }
.row {
  display: flex;
  height: 20px;
  padding-left: 7px;
  background: repeating-linear-gradient(90deg, #777 0 1px, transparent 1px 2px) 11px 10px / 12px 1px no-repeat;
}
.row.leaf { padding-left: 22px; background-size: 10px 1px; }
.row button {
  flex: none;
  width: 9px;
  height: 9px;
  margin: 6px 6px 0 0;
  border: 1px solid #888;
  background: linear-gradient(#2b579a, #2b579a) center / 5px 1px no-repeat, #f4f4f4;
}
.row button.plus {
  background: linear-gradient(#2b579a, #2b579a) center / 5px 1px no-repeat, linear-gradient(#2b579a, #2b579a) center / 1px 5px no-repeat, #f4f4f4;
}
.row svg { flex: none; width: 16px; height: 14px; margin: 3px 3px 0 0; }
.row.leaf svg { height: 16px; }
.row b { flex: none; width: 16px; margin: 1px 4px 0 0; color: #ef6060; font-size: 15px; font-weight: 400; line-height: 15px; }
.row b.green { color: #3c9a4c; margin-right: 2px; }
.row span { white-space: pre; line-height: 12px; }
.row .sel { height: 20px; padding: 0 4px 0 2px; background: #0078d7; outline: 1px dotted #e08a3c; outline-offset: -1px; }

.vbar, .hbar { flex: none; display: flex; align-items: center; background: #f0f0f0; }
.vbar { flex-direction: column; width: 16px; padding: 6px 0 5px; }
.vbar i { flex: 0 0 47%; width: 15px; margin: 108px 0 auto; background: #cdcdcd; }
.vbar svg { width: 8px; height: 6px; }
.hbar { height: 16px; padding: 0 20px 0 5px; }
.hbar i { width: 122px; height: 15px; margin: 0 auto 0 6px; background: #cdcdcd; }
.hbar svg { width: 6px; height: 8px; }
.vbar svg, .hbar svg { fill: none; stroke: #555; stroke-width: 2; }

/* document toolbar */
.doc { flex: 1; min-width: 0; display: flex; flex-direction: column; border-left: 1px solid #888; }
.tools {
  flex: none;
  display: flex;
  height: 67px;
  padding-top: 5px;
  border-top: 1px solid #cfcfe2;
  border-bottom: 1px solid #777;
  background: #f6f6f6;
  overflow: hidden;
}
.grp { flex: none; height: 56px; border-right: 1px solid #ccc; }
.grp > div { display: flex; align-items: center; height: 28px; }
.grp button { display: flex; align-items: center; gap: 4px; }
.grp .in { padding-left: 3px; }
.grp .drop { width: 17px; height: 28px; display: grid; }
.grp button:disabled, .grp .dim { color: #888; }
.grp .sep { height: 24px; margin: 0 9px 0 8px; }
.g1 { padding-left: 12px; width: 74px; }
.g1 button { width: 32px; }
.g2 { padding-left: 11px; width: 105px; }
.g3 { padding-left: 14px; width: 109px; }
.g4 { padding-left: 14px; width: 181px; }
.g5 { padding-left: 7px; width: 99px; }
.g6 { padding-left: 15px; width: 87px; }
.g7 { padding-left: 11px; width: 105px; }
.g8 { padding-left: 14px; border: 0; }
.g5 > div { gap: 6px; }
.g5 button, .g5 svg { width: 23px; height: 23px; }
.g5 svg { stroke: #777; fill: none; }
.on { background: #cacaca; }
.g7 button { gap: 3px; }
.g7 .color {
  height: 20px;
  margin-left: 17px;
  border-bottom: 2px solid #f00;
  color: #555;
  font: 20px/18px "Liberation Serif", serif;
}
.g4 .x, .g4 .ab { color: #888; font: bold 16px/20px "Liberation Sans", sans-serif; gap: 0; }
.g4 .x { width: 30px; padding-left: 2px; }
.g4 .ab { width: 20px; font-size: 14px; font-weight: 400; }
.g4 sup, .g4 sub { font-size: 9px; font-weight: 400; line-height: 10px; }
.g4 sup { align-self: flex-start; }
.g4 sub { align-self: flex-end; }
select {
  appearance: none;
  width: 60px;
  height: 20px;
  padding: 0 2px;
  border: 1px solid #c8c8dc;
  border-radius: 0;
  background: #fff;
  color: #000;
  font: inherit;
}
select:disabled {
  opacity: 1;
  color: #888;
  background:
    linear-gradient(to bottom left, #aaa 50%, transparent 50%) right 7px top 7px / 4px 4px no-repeat,
    linear-gradient(to bottom right, #aaa 50%, transparent 50%) right 3px top 7px / 4px 4px no-repeat,
    #efeff4;
}
.font { width: 80px; margin-right: 14px; }
.size { width: 66px; }

/* spreadsheet */
.sheet { flex: 1; min-height: 0; overflow: hidden; }
table { table-layout: fixed; width: 736px; border-collapse: separate; border-spacing: 0; font-size: 13px; line-height: 13px; }
.c-head { width: 33px; }
.c-edge { width: 5px; }
.c-first { width: 13px; }
.c { width: 11px; }
.c-thin { width: 9px; }
th, td { padding: 0; overflow: hidden; white-space: nowrap; text-align: center; }
td { padding-bottom: 2px; border: solid #000; border-width: 0 1px 1px 0; background: #e0e0e0; }
tbody th {
  border-right: 1px solid #888;
  border-bottom: 1px solid #999;
  background: #f0f0f0;
  font-size: 12px;
  font-weight: 400;
  line-height: 12px;
}
.letters th {
  height: 18px;
  border-right: 1px solid #777;
  background: #f4f4f4;
  font: bold 11px/16px "Liberation Serif", serif;
}
.letters th:nth-child(n+28) { font-size: 7px; }
.letters .corner { text-align: right; }
.corner svg { vertical-align: bottom; }
.r1 { height: 7px; }
.r1 td { border: solid #1d1b24; border-width: 2px 2px 3px; }
.h4 { height: 4px; } .h5 { height: 5px; } .h6 { height: 6px; }
.h23 { height: 23px; } .h24 { height: 24px; } .h26 { height: 26px; }
.h30 { height: 30px; } .h32 { height: 32px; } .h34 { height: 34px; }
.h35 { height: 35px; } .h39 { height: 39px; } .h42 { height: 42px; }
.h52 { height: 52px; } .h60 { height: 60px; } .h64 { height: 64px; } .h82 { height: 82px; }
.w { background: #fff; }
.o { background: #f1c9a5; }
.f { border-color: #d0cec4; }
.edge { border-width: 0 1px 0 0; border-color: #d0cec4; }
.k { border-width: 0 2px 0 0; }
.e { border-right: 2px solid #000; }
.v { border-right-color: #d0cec4; }
.u { border-bottom-color: #d0cec4; }
.b { border-bottom: 2px solid #000; }
.l { text-align: left; padding-left: 2px; }
.r { text-align: right; padding-right: 2px; }
.stack { padding-right: 4px; }
.thick { border-width: 0 0 2px; }
.code { text-align: right; padding-right: 2px; font-size: 22px; line-height: 20px; }
.heading { border-width: 0 0 2px; font-size: 22px; line-height: 22px; }
.sub { font-size: 19px; font-weight: 300; line-height: 22px; color: #222; }
.date { text-align: right; }
.date span { margin-left: 14px; }

.pages { flex: none; display: flex; height: 15px; overflow: hidden; border-top: 1px solid #aaa; }
.pages button { width: 17px; border-right: 1px solid #999; display: grid; place-items: center; }
.pages button svg { width: 10px; height: 10px; }
.pages .page { width: auto; display: flex; align-items: flex-start; gap: 8px; border: 0; background: #fff; line-height: 15px; }
.pages .page svg { width: 8px; height: 15px; stroke: #000; fill: none; }
```
